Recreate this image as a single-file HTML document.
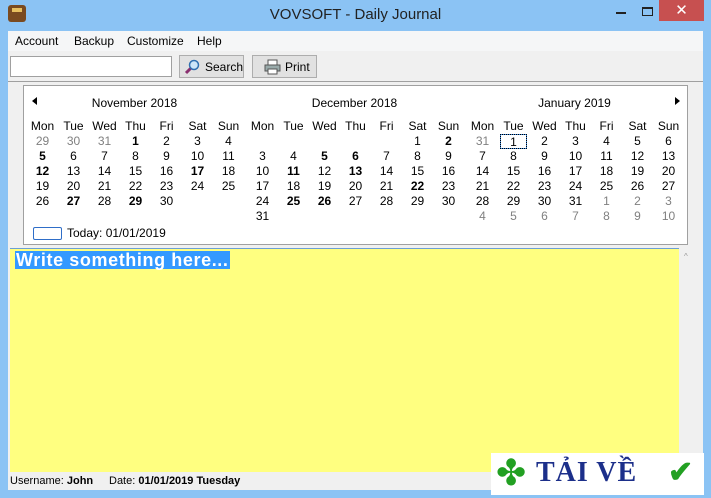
<!DOCTYPE html>
<html><head><meta charset="utf-8"><style>
*{margin:0;padding:0;box-sizing:border-box}
body{width:711px;height:498px;background:#8bc3f4;font-family:"Liberation Sans",sans-serif;font-size:12px;color:#000;position:relative;overflow:hidden}
.a{position:absolute}
.title{left:0;top:6px;width:711px;text-align:center;font-size:15px;color:#222}
.client{left:8px;top:31px;width:695px;height:459px;background:#f0f0f0}
.menu{left:8px;top:31px;width:695px;height:20px;background:#f5f6f7}
.menu span{position:absolute;top:3px;font-size:12px}
.btn{border:1px solid #adadad;background:#e1e1e1;height:23px;top:55px}
.cal{left:23px;top:85px;width:665px;height:160px;background:#fff;border:1px solid #a0a0a0}
.m{position:absolute;top:40px;width:217px;display:grid;grid-template-columns:repeat(7,31px);grid-auto-rows:15px;text-align:center;font-size:12px}
.m b{font-weight:bold}.g{color:#808080}
.mh{position:absolute;top:10px;font-size:12px;width:217px;text-align:center}
.ed{left:10px;top:248px;width:669px;height:224px;background:#ffff80;border-top:1px solid #6b9fd6}
.sb{left:679px;top:248px;width:18px;height:224px;background:#f0f0f0}
.st{left:10px;top:473px;width:687px;height:17px;font-size:11px}
</style></head><body>
<div class="a" style="left:8px;top:5px;width:18px;height:17px;background:#7a4a20;border-radius:3px"></div>
<div class="a" style="left:12px;top:8px;width:10px;height:4px;background:#e8c060"></div>
<div class="a title">VOVSOFT - Daily Journal</div>
<div class="a" style="left:616px;top:12px;width:10px;height:2px;background:#222"></div>
<div class="a" style="left:642px;top:7px;width:11px;height:9px;border:1px solid #222;border-top-width:2px"></div>
<div class="a" style="left:659px;top:0;width:45px;height:21px;background:#c75050;color:#fff;text-align:center;font-size:15px;line-height:21px">✕</div>
<div class="a client"></div>
<div class="a menu"><span style="left:7px">Account</span><span style="left:66px">Backup</span><span style="left:119px">Customize</span><span style="left:189px">Help</span></div>
<div class="a" style="left:8px;top:81px;width:695px;height:1px;background:#a0a0a0"></div>
<div class="a" style="left:10px;top:56px;width:162px;height:21px;background:#fff;border:1px solid #a0a0a0"></div>
<div class="a btn" style="left:179px;width:65px"><svg class="a" style="left:4px;top:3px" width="16" height="16"><line x1="2" y1="14" x2="8" y2="8" stroke="#8a3070" stroke-width="3"/><circle cx="10" cy="6" r="4.5" fill="#cde6f8" stroke="#3070b0" stroke-width="1.5"/></svg><span class="a" style="left:25px;top:4px">Search</span></div>
<div class="a btn" style="left:252px;width:65px"><svg class="a" style="left:11px;top:3px" width="17" height="16"><rect x="4" y="1" width="9" height="5" fill="#fff" stroke="#555"/><rect x="1" y="6" width="15" height="6" fill="#9aa" stroke="#555"/><rect x="4" y="10" width="9" height="5" fill="#fff" stroke="#555"/></svg><span class="a" style="left:32px;top:4px">Print</span></div>
<div class="a cal">
<div class="a" style="left:8px;top:11px;width:0;height:0;border-top:4px solid transparent;border-bottom:4px solid transparent;border-right:5px solid #000"></div>
<div class="a" style="left:651px;top:11px;width:0;height:0;border-top:4px solid transparent;border-bottom:4px solid transparent;border-left:5px solid #000"></div>
<div class="mh" style="left:2px">November 2018</div>
<div class="mh" style="left:222px">December 2018</div>
<div class="mh" style="left:442px">January 2019</div>
<div class="m" style="left:3px;top:33px"><span>Mon</span><span>Tue</span><span>Wed</span><span>Thu</span><span>Fri</span><span>Sat</span><span>Sun</span>
<span class="g">29</span><span class="g">30</span><span class="g">31</span><b>1</b><span>2</span><span>3</span><span>4</span>
<b>5</b><span>6</span><span>7</span><span>8</span><span>9</span><span>10</span><span>11</span>
<b>12</b><span>13</span><span>14</span><span>15</span><span>16</span><b>17</b><span>18</span>
<span>19</span><span>20</span><span>21</span><span>22</span><span>23</span><span>24</span><span>25</span>
<span>26</span><b>27</b><span>28</span><b>29</b><span>30</span></div>
<div class="m" style="left:223px;top:33px"><span>Mon</span><span>Tue</span><span>Wed</span><span>Thu</span><span>Fri</span><span>Sat</span><span>Sun</span>
<span></span><span></span><span></span><span></span><span></span><span>1</span><b>2</b>
<span>3</span><span>4</span><b>5</b><b>6</b><span>7</span><span>8</span><span>9</span>
<span>10</span><b>11</b><span>12</span><b>13</b><span>14</span><span>15</span><span>16</span>
<span>17</span><span>18</span><span>19</span><span>20</span><span>21</span><b>22</b><span>23</span>
<span>24</span><b>25</b><b>26</b><span>27</span><span>28</span><span>29</span><span>30</span>
<span>31</span></div>
<div class="m" style="left:443px;top:33px"><span>Mon</span><span>Tue</span><span>Wed</span><span>Thu</span><span>Fri</span><span>Sat</span><span>Sun</span>
<span class="g">31</span><span style="outline:1px dotted #000;outline-offset:-1px;border:1px solid #3d8be0;margin:0 2px">1</span><span>2</span><span>3</span><span>4</span><span>5</span><span>6</span>
<span>7</span><span>8</span><span>9</span><span>10</span><span>11</span><span>12</span><span>13</span>
<span>14</span><span>15</span><span>16</span><span>17</span><span>18</span><span>19</span><span>20</span>
<span>21</span><span>22</span><span>23</span><span>24</span><span>25</span><span>26</span><span>27</span>
<span>28</span><span>29</span><span>30</span><span>31</span><span class="g">1</span><span class="g">2</span><span class="g">3</span>
<span class="g">4</span><span class="g">5</span><span class="g">6</span><span class="g">7</span><span class="g">8</span><span class="g">9</span><span class="g">10</span></div>
<div class="a" style="left:9px;top:141px;width:29px;height:13px;border:1px solid #2f6ec8;border-radius:2px"></div>
<div class="a" style="left:43px;top:140px">Today: 01/01/2019</div>
</div>
<div class="a ed"><span class="a" style="left:5px;top:2px;background:#3399ff;color:#fff;font-weight:bold;font-size:18px;letter-spacing:0.6px;line-height:18px;padding:0 1px;white-space:nowrap">Write something here...</span></div>
<div class="a sb"><span class="a" style="left:5px;top:4px;font-size:8px;color:#999">^</span></div>
<div class="a st"><span class="a" style="left:0;top:2px">Username: <b>John</b></span><span class="a" style="left:99px;top:2px">Date: <b>01/01/2019 Tuesday</b></span></div>
<div class="a" style="left:491px;top:453px;width:213px;height:42px;background:#fff"></div>
<div class="a" style="left:496px;top:453px;font-size:36px;color:#22a022;line-height:40px">✤</div>
<div class="a" style="left:536px;top:457px;font-family:'Liberation Serif',serif;font-size:28px;font-weight:bold;color:#1c2f8a;letter-spacing:1px">TẢI VỀ</div>
<div class="a" style="left:668px;top:455px;font-size:30px;color:#22a022;font-weight:bold">✔</div>
</body></html>
